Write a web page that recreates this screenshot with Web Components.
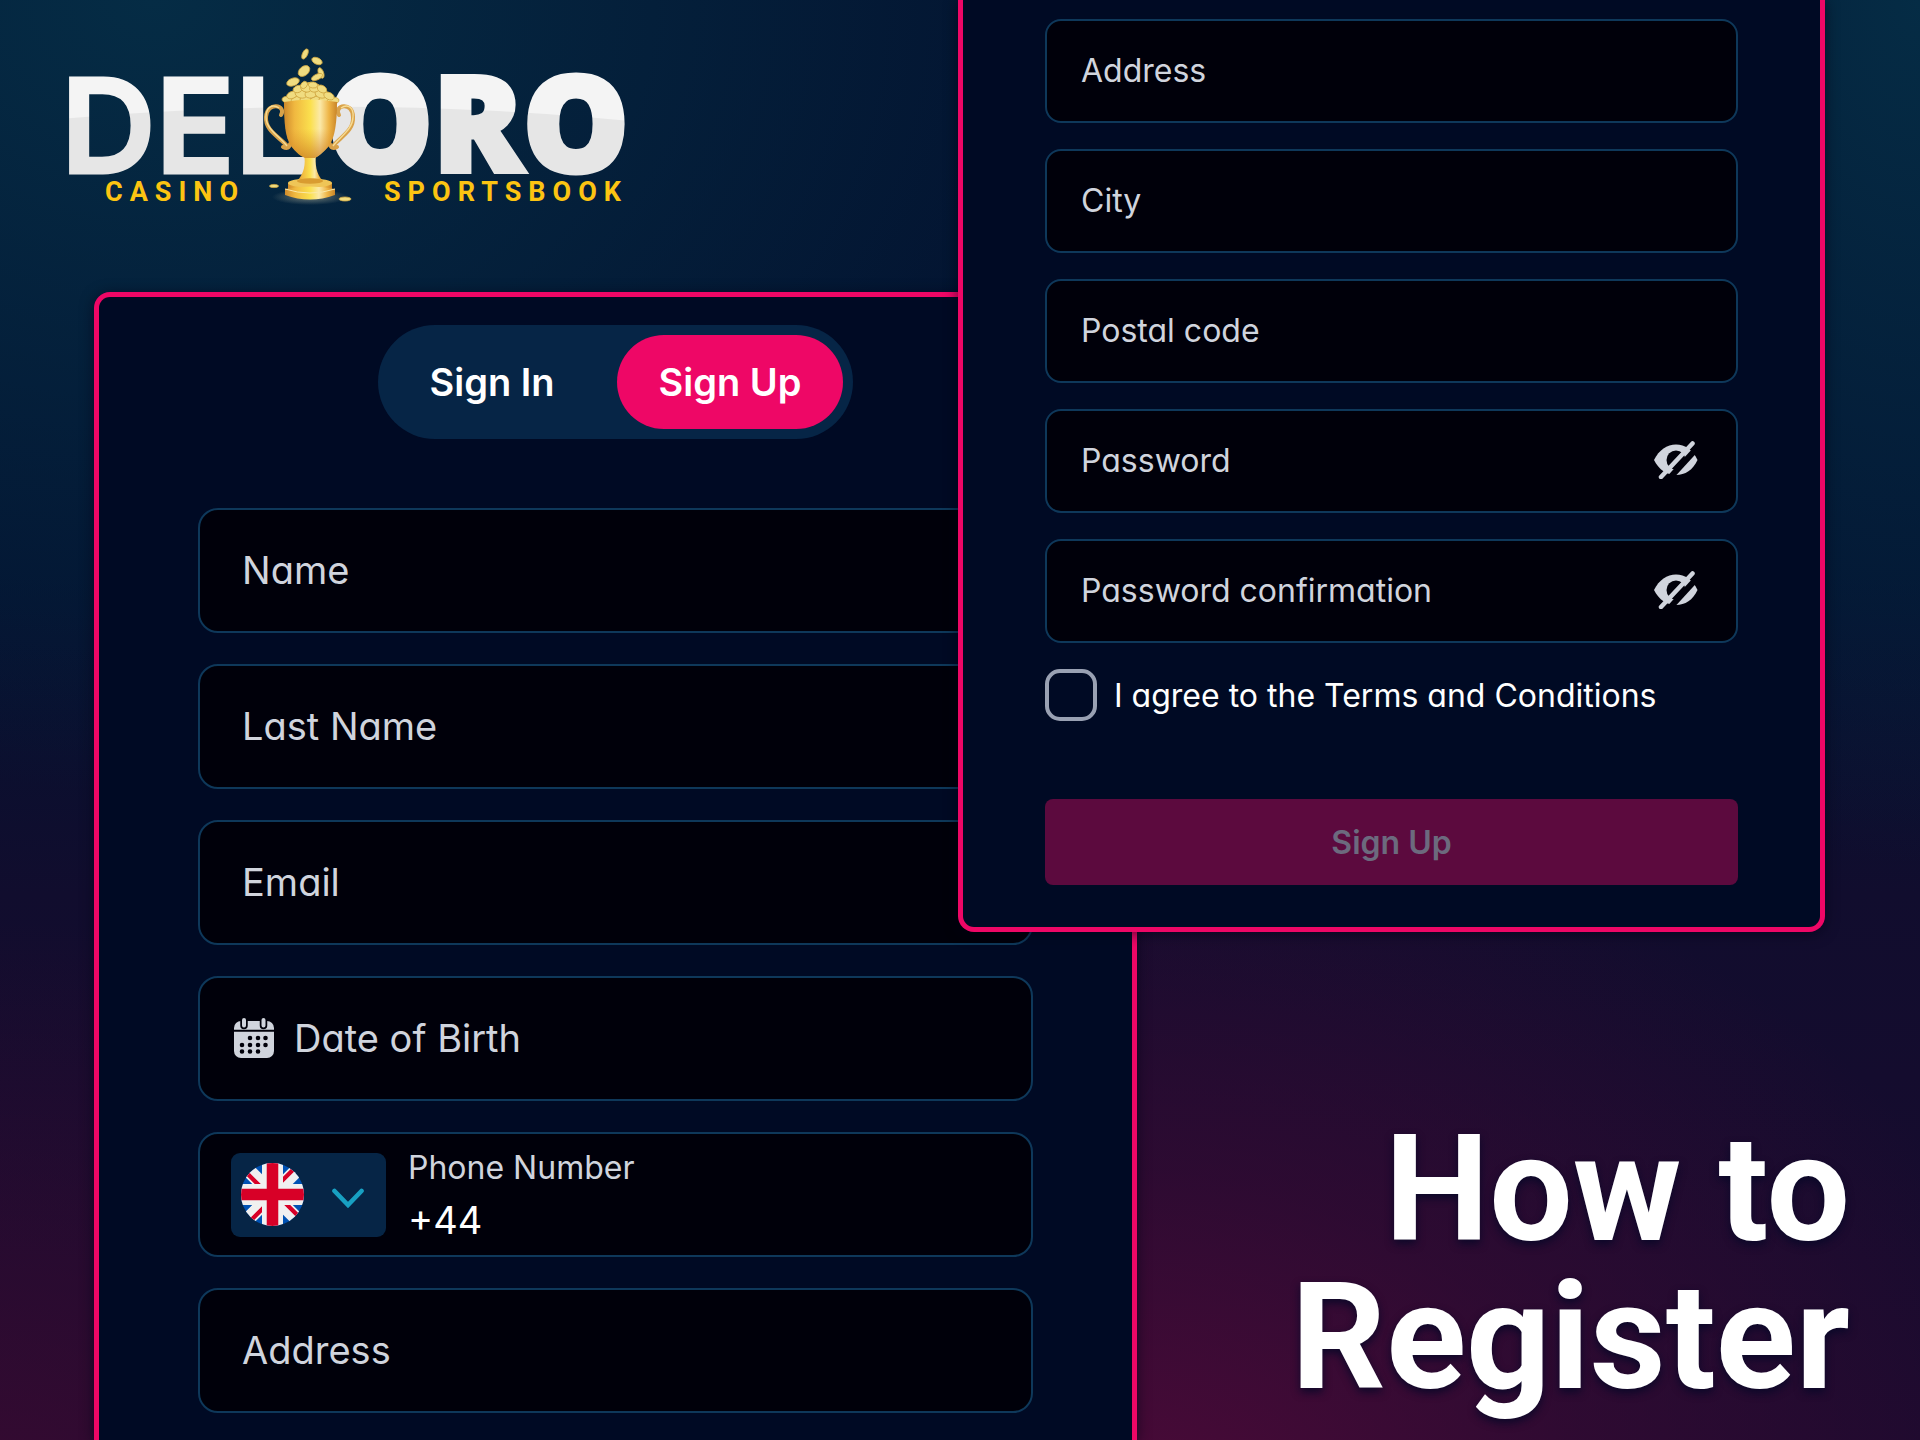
<!DOCTYPE html>
<html lang="en">
<head>
<meta charset="utf-8">
<meta name="viewport" content="width=device-width, initial-scale=1">
<title>Deloro - How to Register</title>
<style>
  :root {
    --pink: #ee0766;
    --navy: #000a24;
    --navy-light: #062546;
    --field-bg: #00000a;
    --field-line: #0e385a;
    --text-soft: #d0d4dd;
  }
  body {
    margin: 0;
    font-family: Inter, "Open Sans", sans-serif;
    font-feature-settings: "cv11";
    color: #fff;
    background: #030b26;
  }
</style>
</head>
<body>
<register-banner>
  <deloro-logo slot="logo"></deloro-logo>

  <form-panel slot="first" class="first">
    <auth-tabs></auth-tabs>
    <form-field label="Name"></form-field>
    <form-field label="Last Name"></form-field>
    <form-field label="Email" type="email"></form-field>
    <form-field label="Date of Birth" icon="calendar"></form-field>
    <phone-field label="Phone Number" value="+44"></phone-field>
    <form-field label="Address"></form-field>
  </form-panel>

  <form-panel slot="second" class="second">
    <form-field label="Address"></form-field>
    <form-field label="City"></form-field>
    <form-field label="Postal code"></form-field>
    <form-field label="Password" type="password"></form-field>
    <form-field label="Password confirmation" type="password"></form-field>
    <terms-check>I agree to the Terms and Conditions</terms-check>
    <submit-button>Sign Up</submit-button>
  </form-panel>

  <span slot="title">How to<br>Register</span>
</register-banner>

<script>
class RegisterBanner extends HTMLElement {
  constructor() {
    super();
    this.attachShadow({ mode: "open" });
  }

  connectedCallback() {
    this.shadowRoot.innerHTML = `
      <style>
        :host {
          display: grid;
          grid-template-columns:
            minmax(0, 94fr) minmax(0, 864fr) minmax(0, 179fr) minmax(0, 688fr) minmax(0, 95fr);
          grid-template-rows: 292px 1fr;
          height: 100vh;
          overflow: hidden;
          background:
            radial-gradient(ellipse 50% 50% at 58% 106%, rgba(86, 10, 58, .85), rgba(60, 10, 52, .6) 50%, transparent),
            radial-gradient(ellipse 35% 40% at 0% 104%, rgba(60, 10, 50, .8), transparent),
            radial-gradient(ellipse 52% 55% at 8% 0%, #052c45, transparent),
            radial-gradient(ellipse 30% 60% at 100% 0%, #052c45, transparent),
            linear-gradient(#03122f 0%, #031230 40%, #110d2e 62%, #1a0a2e 100%);
        }
        header {
          grid-area: 1 / 1 / 2 / 3;
          padding: 45px 0 0 70px;
        }
        .first {
          grid-area: 2 / 2 / 3 / 4;
          display: grid;
          grid-template-columns: minmax(0, 1fr);
        }
        .second { grid-area: 1 / 3 / 3 / 5; z-index: 1; align-self: start; }
        h1 {
          grid-area: 1 / 3 / 3 / 6;
          align-self: end;
          margin: 0;
          padding: 0 70px 28px 0;
          text-align: right;
          font: 700 148px/148px Roboto, sans-serif;
          text-shadow: 0 4px 8px rgba(8, 8, 40, .9);
        }
      </style>
      <header><slot name="logo"></slot></header>
      <section class="first"><slot name="first"></slot></section>
      <section class="second"><slot name="second"></slot></section>
      <h1><slot name="title"></slot></h1>
    `;
  }
}

class DeloroLogo extends HTMLElement {
  constructor() {
    super();
    this.attachShadow({ mode: "open" });
  }

  // one coin: centre, radii and tilt
  coin(x, y, rx, ry, angle) {
    return `<ellipse cx="${x}" cy="${y}" rx="${rx}" ry="${ry}" transform="rotate(${angle} ${x} ${y})"
      fill="#f0dc80" stroke="#cfa640" stroke-width=".8"/>`;
  }

  connectedCallback() {
    const flying = [
      [305, 54, 5.5, 2.6, -65], [317, 61, 5.5, 3.2, 25], [304, 71, 6.5, 4.5, -40],
      [321, 73, 5.5, 2.6, 70], [317, 77, 6, 2.8, -25], [293, 82, 6.5, 3.8, -20],
      [274, 186, 4.5, 1.6, 0], [345, 199, 6, 2, 0]
    ];
    const pile = [
      [288, 100, 6, 3.5, 10], [297, 100, 6, 3.5, -15], [306, 100, 6, 3.5, 10], [316, 100, 6, 3.5, -12],
      [325, 100, 6, 3.5, 8], [333, 101, 6, 3.5, -10], [292, 95, 5.5, 3.5, -20], [301, 94, 6, 4, 15],
      [311, 94, 6, 4, -10], [321, 94, 6, 4, 15], [329, 96, 5.5, 3.5, 25], [298, 89, 5, 3.5, -20],
      [306, 88, 5.5, 4, 15], [315, 88, 5.5, 4, -15], [322, 89, 5, 3.5, 30], [304, 85, 4, 3, -50],
      [313, 85, 4.5, 3, 10]
    ];
    this.shadowRoot.innerHTML = `
      <style>
        :host { display: block; max-width: 562px; }
        svg { display: block; width: 100%; overflow: visible; }
        .word { fill: url(#shine); stroke: url(#shine); }
        .del { font: 600 131px Inter, sans-serif; stroke-width: 3px; }
        .oro { font: 800 133px "Open Sans", sans-serif; stroke-width: 5px; }
        .tag { font: 700 27px Roboto, sans-serif; letter-spacing: 7px; fill: #fcc412; }
      </style>
      <svg viewBox="70 45 562 160" role="img" aria-label="Deloro Casino Sportsbook">
        <defs>
          <pattern id="shine" patternUnits="userSpaceOnUse" x="60" y="40" width="600" height="160">
            <rect width="600" height="160" fill="#e6e6e6"/>
            <path d="M0 0H600V84Q300 52 0 79Z" fill="#f4f4f4"/>
          </pattern>
          <linearGradient id="cup">
            <stop offset="0" stop-color="#d08a2c"/>
            <stop offset=".2" stop-color="#f0b840"/>
            <stop offset=".5" stop-color="#fbe04e"/>
            <stop offset=".68" stop-color="#fbe9a8"/>
            <stop offset=".85" stop-color="#eeb445"/>
            <stop offset="1" stop-color="#c98528"/>
          </linearGradient>
          <linearGradient id="shade" x2="0" y2="1">
            <stop offset=".5" stop-color="#d98a25" stop-opacity="0"/>
            <stop offset="1" stop-color="#c97a20" stop-opacity=".7"/>
          </linearGradient>
          <radialGradient id="glow">
            <stop offset="0" stop-color="#b8b8a0" stop-opacity=".6"/>
            <stop offset="1" stop-color="#b8b8a0" stop-opacity="0"/>
          </radialGradient>
        </defs>
        <text class="word del" x="61" y="173">DEL</text>
        <text class="word oro" x="327" y="172">ORO</text>
        <text class="tag" x="105" y="201">CASINO</text>
        <text class="tag" x="384" y="201">SPORTSBOOK</text>

        <ellipse cx="310" cy="197" rx="38" ry="8" fill="url(#glow)"/>
        <g fill="none" stroke="#d9a24a" stroke-width="4" stroke-linecap="round">
          <path d="M281 115C287 105 267 101 266 117C265 131 280 137 288 147M283 147Q289 150 290 144"/>
          <path d="M339 115C333 105 353 101 353 117C354 131 340 137 332 147M337 147Q331 150 330 144"/>
        </g>
        <g fill="none" stroke="#f7dc94" stroke-width="1.4">
          <path d="M279 108C272 103 266 108 266 117C266 129 279 136 287 146"/>
          <path d="M341 108C348 103 354 108 353 117C353 129 341 136 333 146"/>
        </g>
        <path d="M286 100Q296 84 309 82Q324 84 334 100Z" fill="#e3bf55"/>
        ${pile.map((c) => this.coin(...c)).join("")}
        <path d="M304 154H316C315 164 316 174 323 181H297C304 174 306 164 304 154Z" fill="url(#cup)"/>
        <path d="M284 102Q310 97 337 102C337 122 335 137 329 146Q321 155 315 158H305Q298 155 291 146C285 137 284 122 284 102Z" fill="url(#cup)"/>
        <path d="M284 102Q310 97 337 102C337 122 335 137 329 146Q321 155 315 158H305Q298 155 291 146C285 137 284 122 284 102Z" fill="url(#shade)"/>
        <path d="M288 183V190H332V183Z" fill="url(#cup)"/>
        <ellipse cx="310" cy="183" rx="22" ry="4.5" fill="#efc557"/>
        <ellipse cx="310" cy="181" rx="13" ry="2.8" fill="#d99c30"/>
        <path d="M285 189V195Q310 204 335 195V189Q310 184 285 189Z" fill="url(#cup)"/>
        <path d="M285 189Q310 197 335 189" fill="none" stroke="#fbe9a8"/>
        ${flying.map((c) => this.coin(...c)).join("")}
      </svg>
    `;
  }
}

class FormPanel extends HTMLElement {
  constructor() {
    super();
    this.attachShadow({ mode: "open" });
  }

  connectedCallback() {
    this.shadowRoot.innerHTML = `
      <style>
        :host {
          display: flex;
          flex-direction: column;
          box-sizing: border-box;
          border: 5px solid var(--pink);
          background: var(--navy);
          box-shadow: 0 2px 14px rgba(0, 2, 20, .6);
        }
        :host(.first) {
          --field-height: 125px;
          --field-pad: 42px;
          --field-radius: 20px;
          --field-font: 38px;
          gap: 31px;
          padding: 28px 99px 26px;
          border-bottom: 0;
          border-radius: 16px 16px 0 0;
        }
        :host(.second) {
          --field-height: 104px;
          --field-pad: 34px;
          --field-radius: 16px;
          --field-font: 32px;
          gap: 26px;
          padding: 19px 82px 42px;
          border-top: 0;
          border-radius: 0 0 16px 16px;
        }
      </style>
      <slot></slot>
    `;
  }
}

class AuthTabs extends HTMLElement {
  constructor() {
    super();
    this.attachShadow({ mode: "open" });
  }

  connectedCallback() {
    this.shadowRoot.innerHTML = `
      <style>
        :host {
          display: flex;
          align-self: center;
          box-sizing: border-box;
          height: 114px;
          margin-bottom: 38px;
          padding: 10px;
          border-radius: 57px;
          background: var(--navy-light);
        }
        button {
          border: 0;
          border-radius: 47px;
          padding: 0 42px;
          background: none;
          color: #fff;
          font: inherit;
          font-feature-settings: inherit;
          font-size: 38px;
          font-weight: 600;
          white-space: nowrap;
        }
        button:first-of-type { padding-right: 62px; }
        button[aria-selected="true"] { background: var(--pink); }
      </style>
      <button type="button" role="tab" aria-selected="false">Sign In</button>
      <button type="button" role="tab" aria-selected="true">Sign Up</button>
    `;
    this.setAttribute("role", "tablist");
  }
}

const fieldStyles = `
  :host {
    display: flex;
    align-items: center;
    box-sizing: border-box;
    height: var(--field-height);
    padding: 0 var(--field-pad) 2px;
    border: 2px solid var(--field-line);
    border-radius: var(--field-radius);
    background: var(--field-bg);
    color: var(--text-soft);
    font-size: var(--field-font);
  }
  label { white-space: nowrap; }
  input {
    flex: 1;
    min-width: 0;
    padding: 0;
    border: 0;
    outline: 0;
    background: none;
    color: #fff;
    font: inherit;
    font-feature-settings: inherit;
  }
  svg { display: block; flex: none; }
`;

const calendarIcon = `
  <svg width="40" height="40" viewBox="0 0 40 40" aria-hidden="true">
    <rect y="3" width="40" height="37" rx="7" fill="#d0d4dd"/>
    <path d="M0 12.700H40" stroke="#00000a" stroke-width="2"/>
    <path d="M10 2V7.500M29.500 2V7.500" stroke="#00000a" stroke-width="7.500" stroke-linecap="round"/>
    <path d="M10 2V7.500M29.500 2V7.500" stroke="#d0d4dd" stroke-width="4" stroke-linecap="round"/>
    <path d="M16 20h0M24 20h0M31.500 20h0M8 27h0M16 27h0M24 27h0M31.500 27h0M8 33.500h0M16 33.500h0M24 33.500h0"
      stroke="#00000a" stroke-width="4.600" stroke-linecap="round"/>
  </svg>`;

const eyeOffIcon = `
  <svg width="44" height="38" viewBox="0 0 44 38" aria-hidden="true">
    <mask id="cut">
      <rect width="44" height="38" fill="#fff"/>
      <circle cx="22" cy="19" r="9.500"/>
      <path d="M12 41L44 6" stroke="#000" stroke-width="6"/>
    </mask>
    <path d="M0 19C5 9 13 3.500 22 3.500S39 9 43.500 19C39 29 31 34 22 34S5 29 0 19Z" fill="#d0d4dd" mask="url(#cut)"/>
    <path d="M38.500 2.500L7 36" stroke="#d0d4dd" stroke-width="4.500" stroke-linecap="round"/>
  </svg>`;

class FormField extends HTMLElement {
  constructor() {
    super();
    this.attachShadow({ mode: "open" });
  }

  connectedCallback() {
    const label = this.getAttribute("label");
    const type = this.getAttribute("type") || "text";
    const hasIcon = this.getAttribute("icon") === "calendar";
    this.shadowRoot.innerHTML = `
      <style>
        ${fieldStyles}
        :host([icon]) { gap: 20px; padding-left: 34px; }
        button { flex: none; margin-right: 4px; padding: 0; border: 0; background: none; }
      </style>
      ${hasIcon ? calendarIcon : ""}
      <label for="control">${label}</label>
      <input id="control" type="${type}">
      ${type === "password" ? `<button type="button" aria-label="Show password">${eyeOffIcon}</button>` : ""}
    `;
    const button = this.shadowRoot.querySelector("button");
    const input = this.shadowRoot.querySelector("input");
    if (button) {
      button.addEventListener("click", () => {
        input.type = input.type === "password" ? "text" : "password";
      });
    }
  }
}

class PhoneField extends HTMLElement {
  constructor() {
    super();
    this.attachShadow({ mode: "open" });
  }

  connectedCallback() {
    this.shadowRoot.innerHTML = `
      <style>
        ${fieldStyles}
        :host { gap: 22px; padding: 0 31px; }
        .country {
          position: relative;
          display: flex;
          align-items: center;
          gap: 28px;
          box-sizing: border-box;
          height: 84px;
          padding: 0 22px 0 10px;
          border-radius: 9px;
          background: var(--navy-light);
        }
        select {
          position: absolute;
          inset: 0;
          width: 100%;
          opacity: 0;
        }
        .number { display: flex; flex: 1; flex-direction: column; gap: 6px; min-width: 0; }
        label { font-size: 32px; line-height: 44px; }
        input { flex: none; width: 100%; line-height: 48px; height: 48px; }
      </style>
      <div class="country">
        <svg width="63" height="63" viewBox="0 0 60 60" aria-hidden="true">
          <clipPath id="round"><circle cx="30" cy="30" r="30"/></clipPath>
          <g clip-path="url(#round)">
            <path d="M0 0H60V60H0Z" fill="#0052b4"/>
            <path d="M0 0L60 60M60 0L0 60" stroke="#f0f0f0" stroke-width="13"/>
            <path d="M0 4L26 30M34 30L60 56M56 0L30 26M30 34L4 60" stroke="#d80027" stroke-width="4"/>
            <path d="M30 0V60M0 30H60" stroke="#f0f0f0" stroke-width="20"/>
            <path d="M30 0V60M0 30H60" stroke="#d80027" stroke-width="11"/>
          </g>
        </svg>
        <svg width="32" height="28" viewBox="0 0 32 28" aria-hidden="true">
          <path d="M2.500 10L16 24L29.500 10" fill="none" stroke="#18a0c2" stroke-width="4.600" stroke-linecap="round"/>
        </svg>
        <select aria-label="Country code"><option></option></select>
      </div>
      <div class="number">
        <label for="control">${this.getAttribute("label")}</label>
        <input id="control" type="tel" value="${this.getAttribute("value") || ""}">
      </div>
    `;
  }
}

class TermsCheck extends HTMLElement {
  constructor() {
    super();
    this.attachShadow({ mode: "open" });
  }

  connectedCallback() {
    this.shadowRoot.innerHTML = `
      <style>
        :host { display: block; font-size: 32px; }
        label { display: flex; align-items: center; gap: 17px; white-space: nowrap; }
        input {
          appearance: none;
          box-sizing: border-box;
          flex: none;
          width: 52px;
          height: 52px;
          margin: 0;
          border: 4px solid #99a1b3;
          border-radius: 15px;
        }
        input:checked { background: var(--pink); }
      </style>
      <label><input type="checkbox"><span><slot></slot></span></label>
    `;
  }
}

class SubmitButton extends HTMLElement {
  constructor() {
    super();
    this.attachShadow({ mode: "open" });
  }

  connectedCallback() {
    this.shadowRoot.innerHTML = `
      <style>
        :host { display: grid; margin-top: 52px; }
        button {
          height: 86px;
          border: 0;
          border-radius: 8px;
          background: #5c0a3e;
          color: #6c6a7e;
          font: inherit;
          font-feature-settings: inherit;
          font-size: 32px;
          font-weight: 600;
        }
      </style>
      <button type="submit" disabled><slot></slot></button>
    `;
  }
}

customElements.define("register-banner", RegisterBanner);
customElements.define("deloro-logo", DeloroLogo);
customElements.define("form-panel", FormPanel);
customElements.define("auth-tabs", AuthTabs);
customElements.define("form-field", FormField);
customElements.define("phone-field", PhoneField);
customElements.define("terms-check", TermsCheck);
customElements.define("submit-button", SubmitButton);
</script>
</body>
</html>
